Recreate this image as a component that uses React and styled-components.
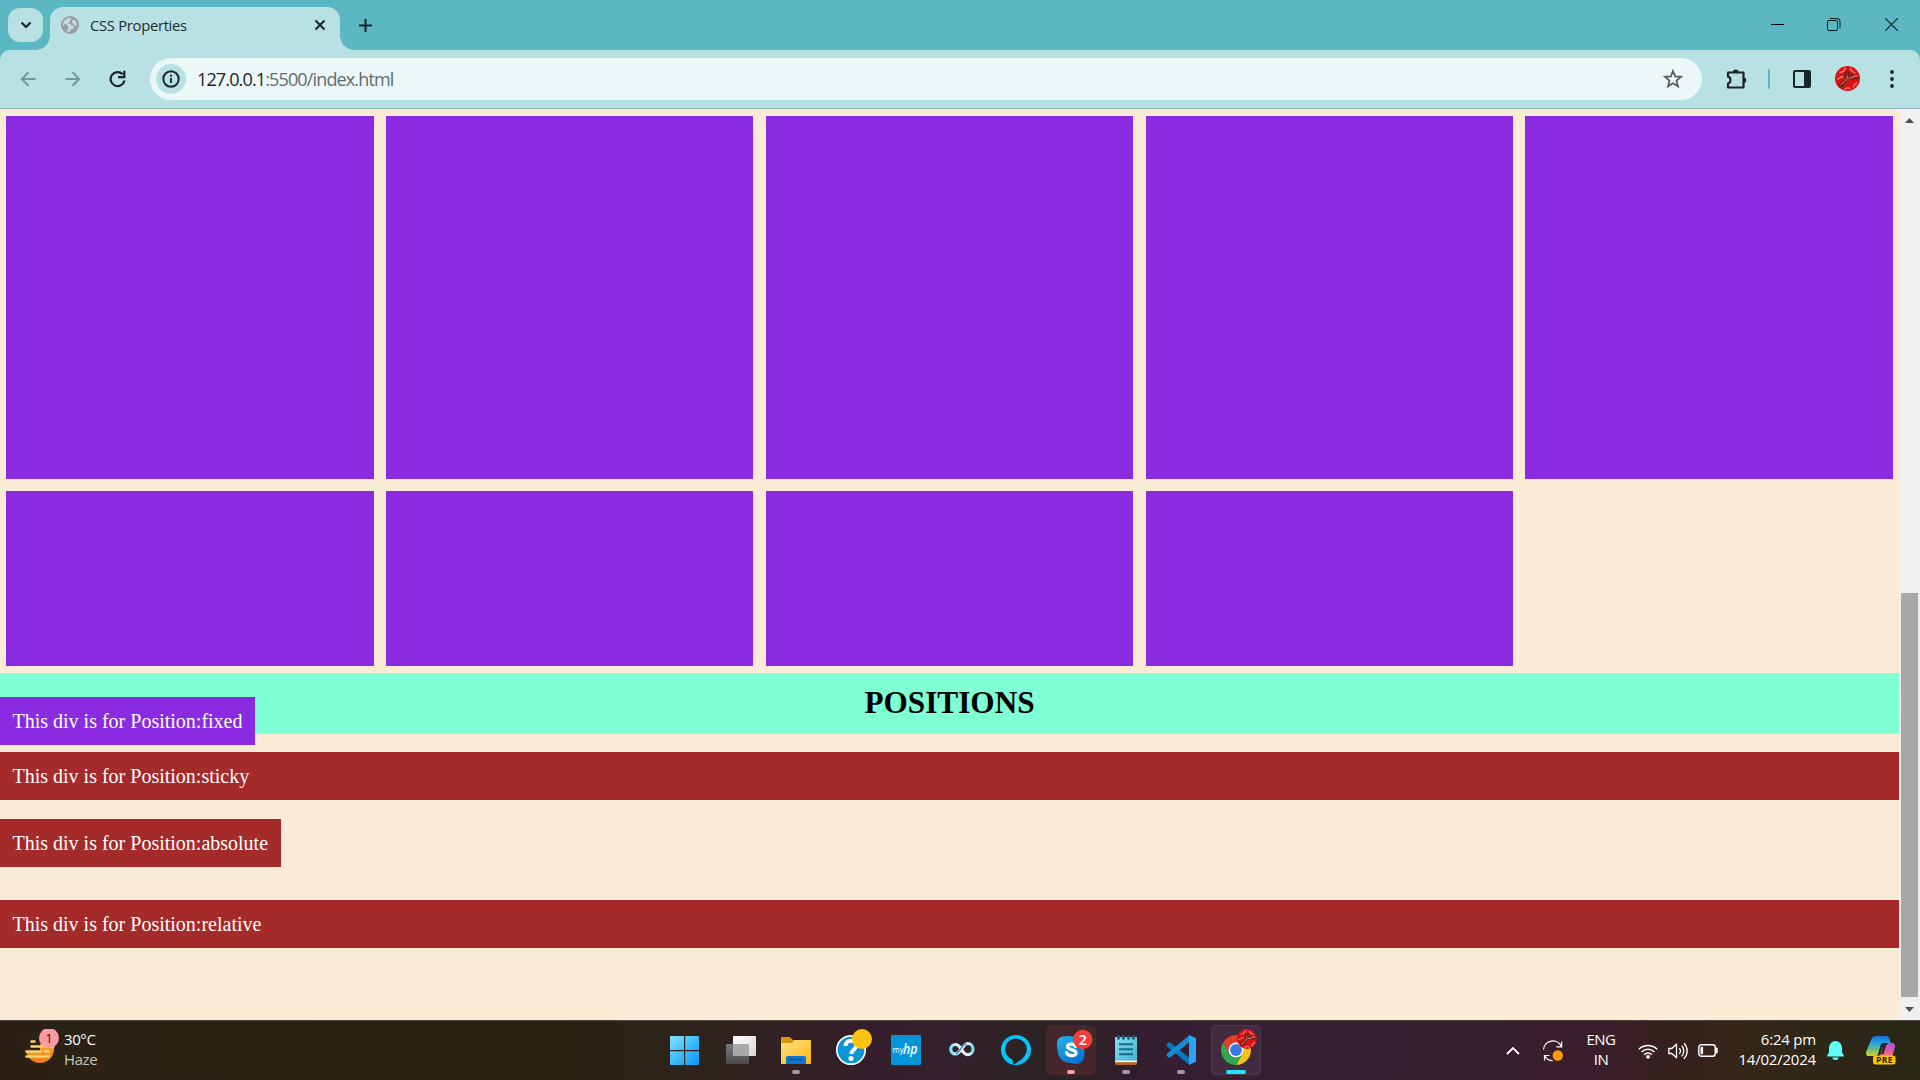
import React from "react";
import styled, { createGlobalStyle } from "styled-components";

const Global = createGlobalStyle`
  * { box-sizing: border-box; }
  html, body { margin: 0; padding: 0; }
  body { overflow: hidden; width: 1920px; height: 1080px; }
  svg { display: block; flex: none; }
`;

const ui = `"Open Sans", "Noto Sans", sans-serif`;

const Desktop = styled.div`
  width: 1920px;
  height: 1080px;
  display: flex;
  flex-direction: column;
  background: #5bb8c2;
  overflow: hidden;
`;

/* ---------- tab strip ---------- */
const TabStrip = styled.div`
  height: 50px;
  flex: none;
  display: flex;
  align-items: flex-start;
  padding-left: 8px;
`;
const TabSearch = styled.div`
  width: 35px;
  height: 34px;
  margin-top: 8px;
  border-radius: 12px;
  background: #b8e1e4;
  display: flex;
  align-items: center;
  justify-content: center;
`;
const Tab = styled.div`
  position: relative;
  width: 290px;
  height: 43px;
  margin: 7px 0 0 7px;
  padding: 0 13px 7px 11px;
  border-radius: 13px 13px 0 0;
  background: #b8e1e4;
  display: flex;
  align-items: center;
  &::before,
  &::after {
    content: "";
    position: absolute;
    bottom: 0;
    width: 14px;
    height: 14px;
  }
  &::before {
    left: -14px;
    background: radial-gradient(circle at 0 0, transparent 13.5px, #b8e1e4 14px);
  }
  &::after {
    right: -14px;
    background: radial-gradient(circle at 100% 0, transparent 13.5px, #b8e1e4 14px);
  }
`;
const TabTitle = styled.div`
  font: 400 14.8px/20px ${ui};
  letter-spacing: -0.3px;
  color: #1d2b2d;
  margin-left: 11px;
  flex: 1;
  white-space: nowrap;
`;
const NewTab = styled.div`
  width: 35px;
  height: 50px;
  margin-left: 8px;
  display: flex;
  align-items: center;
  justify-content: center;
`;
const WindowButtons = styled.div`
  display: flex;
  margin-left: auto;
  height: 49px;
`;
const WindowButton = styled.div`
  width: 57px;
  display: flex;
  align-items: center;
  justify-content: center;
`;

/* ---------- toolbar ---------- */
const Toolbar = styled.div`
  height: 59px;
  flex: none;
  display: flex;
  align-items: center;
  padding-left: 5px;
  border-radius: 10px 10px 0 0;
  border-bottom: 1px solid #93b5ba;
  background: #b8e1e4;
`;
const Slot = styled.div`
  width: 45px;
  height: 45px;
  display: flex;
  align-items: center;
  justify-content: center;
`;
const Omnibox = styled.div`
  width: 1552px;
  height: 42px;
  margin: 0 11.5px 0 10px;
  padding: 0 19.5px 0 6px;
  border-radius: 21px;
  background: #ecf8f8;
  display: flex;
  align-items: center;
`;
const SiteInfo = styled.div`
  width: 30px;
  height: 30px;
  border-radius: 50%;
  background: #b8e1e4;
  display: flex;
  align-items: center;
  justify-content: center;
`;
const Url = styled.div`
  font: 400 18px/24px ${ui};
  letter-spacing: -0.86px;
  margin-left: 11px;
  flex: 1;
  color: #5f6c6e;
  white-space: nowrap;
`;
const Host = styled.span`
  color: #1b2527;
`;
const Separator = styled.div`
  width: 2px;
  height: 20px;
  margin: 0 9.5px;
  border-radius: 1px;
  background: #5bb8c2;
`;

/* ---------- web page ---------- */
const Viewport = styled.div`
  height: 911px;
  flex: none;
  display: flex;
`;
const Page = styled.main`
  position: relative;
  width: 1899px;
  background: antiquewhite;
  font: 20px/23px "Liberation Serif", "Times New Roman", serif;
`;
const BoxGrid = styled.section`
  display: grid;
  grid-template-columns: repeat(5, 1fr);
  grid-template-rows: 363px 175px;
  gap: 12px 12.5px;
  padding: 7px 6.25px;
`;
const Box = styled.div`
  background: blueviolet;
`;
const Heading = styled.h2`
  margin: 0;
  height: 61px;
  font-size: 31.25px;
  line-height: 60px;
  text-align: center;
  color: #000;
  background: aquamarine;
`;
const Bar = styled.div`
  width: ${(p) => (p.$fit ? "fit-content" : "auto")};
  height: 48px;
  margin-top: ${(p) => p.$gap}px;
  padding: 12.5px;
  color: #fff;
  background: brown;
  white-space: nowrap;
`;
const FixedBar = styled(Bar)`
  position: absolute;
  left: 0;
  top: 588px;
  margin: 0;
  background: blueviolet;
`;
const Scrollbar = styled.div`
  width: 21px;
  background: #f0f0f0;
  display: flex;
  flex-direction: column;
  align-items: center;
  padding: 9px 0 8px;
`;
const Thumb = styled.div`
  width: 17px;
  height: 404px;
  margin: auto 0 10px;
  background: #a8a8a8;
`;

/* ---------- taskbar ---------- */
const Taskbar = styled.div`
  height: 60px;
  flex: none;
  display: flex;
  border-top: 1px solid #4a453a;
  background: linear-gradient(
    90deg,
    #2d1f15 0,
    #2b2315 110px,
    #292314 560px,
    #2d2419 680px,
    #351e2b 860px,
    #35202b 940px,
    #2b2325 1030px,
    #301e2b 1120px,
    #371e33 1200px,
    #371f2c 1480px,
    #3a1e2b 1600px,
    #35211a 1690px,
    #38241a 1720px,
    #2e2718 1800px,
    #292616 1920px
  );
  color: #fff;
  font: 400 15px/20px ${ui};
`;
const Weather = styled.div`
  width: 661px;
  flex: none;
  display: flex;
  padding: 8px 0 0 20px;
`;
const WeatherText = styled.div`
  margin-left: 4px;
  letter-spacing: -0.4px;
`;
const Muted = styled.div`
  color: #c9c5bf;
`;
const Apps = styled.div`
  flex: none;
  display: flex;
  gap: 5px;
  padding-top: 4px;
`;
const AppButton = styled.div`
  width: 50px;
  height: 50px;
  border-radius: 5px;
  background: ${(p) => p.$bg || "transparent"};
  box-shadow: ${(p) => (p.$edge ? "inset 0 0 0 1px " + p.$edge : "none")};
`;
const Tray = styled.div`
  flex: 1;
  display: flex;
  padding-left: 240px;
`;
const TrayIcon = styled.div`
  width: ${(p) => p.$w}px;
  height: 59px;
  display: flex;
  align-items: center;
  justify-content: center;
`;
const Language = styled.div`
  width: 40px;
  margin-right: 12px;
  padding-top: 8px;
  text-align: center;
  letter-spacing: -0.5px;
`;
const Clock = styled.div`
  width: 93px;
  padding-top: 8px;
  text-align: right;
  letter-spacing: -0.2px;
  white-space: nowrap;
`;

/* ---------- icons ---------- */
const Icon = ({ w, h, children, ...rest }) => (
  <svg width={w} height={h} viewBox={`0 0 ${w} ${h}`} fill="none" {...rest}>
    {children}
  </svg>
);
const AppIcon = ({ bg, edge, children }) => (
  <AppButton $bg={bg} $edge={edge}>
    <Icon w={50} h={50}>{children}</Icon>
  </AppButton>
);
const Indicator = ({ x = 21, w = 8, color = "#a09aa0" }) => (
  <rect x={x} y="45" width={w} height="4" rx="2" fill={color} />
);
const RedBadge = ({ cx, cy, r }) => (
  <g transform={`translate(${cx} ${cy}) scale(${r / 12.5})`}>
    <circle r="12.5" fill="#d81416" />
    <path d="M-8-6c3 0 5-1 6-5M3-10.500c0 2 2 4 5 5M-10 1c2-2 4-3 6-3M6 9c0-3 2-4 4-5M-3 11c2-2 4-2 6-1" stroke="#f0806e" strokeWidth="1.300" />
    <path d="M-8 8c0-4 4-4 6-6C1-1 2.500-5 1-6.500-1-7-4-3-2-.5 0 0 1-1 2-2c0 2 1 3 2 1l1.500-4M5 1c1 0 1.500-2 2.500-2s0 3 3 0M-8 8c3 1 6-3 7-7" stroke="#5f2a22" strokeWidth="1.700" />
    <path d="M-7 6.500c3-3 6-3 7-9M1-.5c3 0 5-1.500 9-2.500" stroke="#dcb5a6" strokeWidth="0.800" />
  </g>
);

const ChromeIcon = () => (
  <g transform="translate(25 25)">
    <path d="M0-7.500H12.990A15 15 0 0 1 0 15L6.500 3.750Z" fill="#fcc31e" />
    <path d="M-12.990-7.500L-6.500 3.750A7.500 7.500 0 0 0 6.500 3.750L0 15A15 15 0 0 1-12.990-7.500Z" fill="#2da94f" />
    <path d="M-12.990-7.500A15 15 0 0 1 12.990-7.500H0L-6.500 3.750Z" fill="#e33b2e" />
    <circle r="7.500" fill="#fff" />
    <circle r="5.900" fill="#3b78e8" />
  </g>
);

const Gradients = () => (
  <svg width="0" height="0" style={{ position: "absolute" }}>
    <defs>
      <linearGradient id="win" x1="9" y1="11" x2="38" y2="40" gradientUnits="userSpaceOnUse">
        <stop stopColor="#86e1fb" /><stop offset=".5" stopColor="#3fbdf8" /><stop offset="1" stopColor="#0d92f5" />
      </linearGradient>
      <linearGradient id="pane" x1="0" y1="0" x2="1" y2="1">
        <stop stopColor="#fff" /><stop offset="1" stopColor="#d8d8d8" />
      </linearGradient>
      <linearGradient id="paneBack" x1="0" y1="0" x2="0" y2="1">
        <stop stopColor="#777" /><stop offset="1" stopColor="#4c4c4c" />
      </linearGradient>
      <linearGradient id="folder" x1="0" y1="0" x2="1" y2="1">
        <stop stopColor="#ffe083" /><stop offset="1" stopColor="#fcb912" />
      </linearGradient>
      <linearGradient id="skype" x1="0" y1="0" x2="0.6" y2="1">
        <stop stopColor="#22b7f0" /><stop offset="1" stopColor="#0474d0" />
      </linearGradient>
      <linearGradient id="loop" x1="0" y1="0" x2="1" y2="0">
        <stop stopColor="#6fe8f0" /><stop offset=".4" stopColor="#fff" /><stop offset=".8" stopColor="#d8f3ff" /><stop offset="1" stopColor="#72dce8" />
      </linearGradient>
      <linearGradient id="note" x1="0" y1="0" x2="1" y2="1">
        <stop stopColor="#86dcee" /><stop offset="1" stopColor="#43b4d4" />
      </linearGradient>
      <linearGradient id="sun" x1="0" y1="0" x2="0" y2="1">
        <stop stopColor="#fcc430" /><stop offset="1" stopColor="#f0781c" />
      </linearGradient>
      <linearGradient id="copA" x1="0" y1="0" x2="0" y2="1">
        <stop stopColor="#1670d8" /><stop offset=".35" stopColor="#1fa3e8" /><stop offset=".65" stopColor="#5cc07c" /><stop offset="1" stopColor="#e5cf2c" />
      </linearGradient>
      <linearGradient id="copB" x1="0" y1="0" x2="0" y2="1">
        <stop stopColor="#a855e0" /><stop offset=".6" stopColor="#e85aa8" /><stop offset="1" stopColor="#f88060" />
      </linearGradient>
    </defs>
  </svg>
);

const bars = [
  { label: "This div is for Position:sticky", gap: 18 },
  { label: "This div is for Position:absolute", gap: 19, fit: true },
  { label: "This div is for Position:relative", gap: 33 },
];

const Browser = () => (
  <>
    <TabStrip>
      <TabSearch>
        <Icon w={12} h={8}><path d="M1.500 1.500L6 6l4.500-4.500" stroke="#1b2527" strokeWidth="2.200" /></Icon>
      </TabSearch>
      <Tab>
        <Icon w={18} h={18}>
          <circle cx="9" cy="9" r="9" fill="#9b9ba3" />
          <path d="M2 8C2.500 4.500 5.500 2 9 2l1.500 1-2 1.700.3 1.600L6.500 8H9l1.500 1.500 2.500.5-.5 2.500-3 1.200L9 16C5 16 4.500 13 4.800 11.500L2 9.500Z" fill="#c3dcdf" />
          <path d="M3.500 7.500l2.700 1.300 1.300 2L7 14.500 4.500 13 3 10Z" fill="#9b9ba3" />
          <path d="M12.500 3.200l2.700 2.800.8 3-1.500 1-2-1.500-1.500-2 .3-2Z" fill="#c3dcdf" />
        </Icon>
        <TabTitle>CSS Properties</TabTitle>
        <Icon w={14} h={14}><path d="M2.500 2.500l9 9M11.500 2.500l-9 9" stroke="#1b2527" strokeWidth="2" /></Icon>
      </Tab>
      <NewTab>
        <Icon w={13} h={13}><path d="M6.500 0v13M0 6.500h13" stroke="#1b2527" strokeWidth="2" /></Icon>
      </NewTab>
      <WindowButtons>
        <WindowButton><Icon w={13} h={13}><path d="M0 6.500h13" stroke="#000" /></Icon></WindowButton>
        <WindowButton>
          <Icon w={15} h={13}>
            <rect x=".5" y="2.500" width="10" height="10" rx="1.500" stroke="#0c1a1c" />
            <path d="M3 .5h7a3 3 0 0 1 3 3V10.500" stroke="#0c1a1c" />
          </Icon>
        </WindowButton>
        <WindowButton><Icon w={13} h={13}><path d="M.3.300l12.400 12.400M12.700.3L.3 12.700" stroke="#0c1a1c" strokeWidth="1.200" /></Icon></WindowButton>
      </WindowButtons>
    </TabStrip>

    <Toolbar>
      <Slot><Icon w={16} h={16}><path d="M15.500 8H2M8.500 1.300L1.800 8l6.700 6.700" stroke="#74989c" strokeWidth="2" /></Icon></Slot>
      <Slot><Icon w={16} h={16}><path d="M.5 8H14M7.500 1.300L14.200 8l-6.700 6.700" stroke="#74989c" strokeWidth="2" /></Icon></Slot>
      <Slot>
        <Icon w={18} h={18}>
          <path d="M13.700 4.200A7 7 0 1 0 15.500 10.500" stroke="#1b2527" strokeWidth="2.200" />
          <path d="M15.300 .8V7.200H9" stroke="#1b2527" strokeWidth="2.200" />
        </Icon>
      </Slot>
      <Omnibox>
        <SiteInfo>
          <Icon w={18} h={18}>
            <circle cx="9" cy="9" r="7.700" stroke="#1b2527" strokeWidth="2" />
            <path d="M9 8v5M9 4.800v2" stroke="#1b2527" strokeWidth="1.900" />
          </Icon>
        </SiteInfo>
        <Url><Host>127.0.0.1</Host>:5500/index.html</Url>
        <Icon w={20} h={20}>
          <path d="M10 2l2.150 5.400 5.850.45-4.500 3.750 1.450 5.700L10 14.200l-4.950 3.100 1.450-5.700L2 7.850l5.850-.45z" stroke="#555f61" strokeWidth="1.800" />
        </Icon>
      </Omnibox>
      <Slot>
        <Icon w={22} h={22}>
          <path d="M3 4.500H18.500V19.500H3V15.500c3.200-.3 3.200-6.500 0-6.800Z" stroke="#1b2527" strokeWidth="2.200" strokeLinejoin="round" />
          <path d="M7.800 4.500a3 3 0 0 1 6 0ZM18.500 9.500a2.800 2.800 0 0 1 0 5.600Z" fill="#1b2527" />
        </Icon>
      </Slot>
      <Separator />
      <Slot>
        <Icon w={18} h={18}>
          <rect x="1" y="1" width="16" height="16" rx="1" stroke="#1b2527" strokeWidth="2" />
          <path d="M11 1h6v16h-6z" fill="#1b2527" />
        </Icon>
      </Slot>
      <Slot><Icon w={25} h={26}><RedBadge cx={12.5} cy={12.5} r={12.5} /></Icon></Slot>
      <Slot>
        <Icon w={4} h={18}>
          <circle cx="2" cy="2" r="1.900" fill="#1b2527" /><circle cx="2" cy="9" r="1.900" fill="#1b2527" /><circle cx="2" cy="16" r="1.900" fill="#1b2527" />
        </Icon>
      </Slot>
    </Toolbar>
  </>
);

export default function App() {
  return (
    <Desktop>
      <Global />
      <Gradients />
      <Browser />
      <Viewport>
        <Page>
          <BoxGrid>
            {Array.from({ length: 9 }, (_, i) => <Box key={i} />)}
          </BoxGrid>
          <Heading>POSITIONS</Heading>
          {bars.map((b) => (
            <Bar key={b.label} $gap={b.gap} $fit={b.fit}>{b.label}</Bar>
          ))}
          <FixedBar $fit>This div is for Position:fixed</FixedBar>
        </Page>
        <Scrollbar>
          <Icon w={9} h={5}><path d="M4.500 0L9 5H0z" fill="#505050" /></Icon>
          <Thumb />
          <Icon w={9} h={5}><path d="M4.500 5L9 0H0z" fill="#505050" /></Icon>
        </Scrollbar>
      </Viewport>

      <Taskbar>
        <Weather>
          <Icon w={40} h={40}>
            <circle cx="20" cy="20" r="14" fill="url(#sun)" />
            <path d="M0 0h40v15H0zM0 15h20v8H0z" fill="#2b2115" />
            <path d="M11.500 12.500h3M11.500 17.500h22M6.500 22.500h14M25 22.500h4M6.500 27.500h22" stroke="#f4d273" strokeWidth="2.600" strokeLinecap="round" />
            <circle cx="29" cy="9" r="10" fill="#ff99a4" />
            <text x="29" y="13.500" textAnchor="middle" fontSize="13" fontFamily="Open Sans" fill="#2a1518">1</text>
          </Icon>
          <WeatherText>
            <div>30°C</div>
            <Muted>Haze</Muted>
          </WeatherText>
        </Weather>

        <Apps>
          <AppIcon>
            <path d="M10 11h13v14H9V12a1 1 0 0 1 1-1ZM24.200 11H37a1 1 0 0 1 1 1v13H24.200ZM9 26.200h14V40H10a1 1 0 0 1-1-1ZM24.200 26.200H38V39a1 1 0 0 1-1 1H24.200Z" fill="url(#win)" />
          </AppIcon>
          <AppIcon>
            <rect x="17" y="11" width="23" height="20" rx="1" fill="url(#pane)" />
            <rect x="10" y="19" width="23" height="20" rx="1" fill="url(#paneBack)" />
            <path d="M17 19h16v12H17z" fill="#a9a9a9" />
          </AppIcon>
          <AppIcon>
            <path d="M10 13a1 1 0 0 1 1-1h8l3 3h16v8H10z" fill="#d9960c" />
            <path d="M10 18h11l2.500-3H39a1 1 0 0 1 1 1v22a1 1 0 0 1-1 1H11a1 1 0 0 1-1-1z" fill="url(#folder)" />
            <path d="M15 39v-6a2 2 0 0 1 2-2h16a2 2 0 0 1 2 2v6z" fill="#1177cc" />
            <path d="M19 34.500h12" stroke="#0b3f87" strokeWidth="1.200" />
            <Indicator />
          </AppIcon>
          <AppIcon>
            <circle cx="25" cy="25" r="14.200" fill="#0b94d6" stroke="#f2fafd" strokeWidth="1.700" />
            <path d="M19.500 21c0-7 11-7 11-.5 0 4-5.200 4-5.200 8.500" stroke="#fff" strokeWidth="4" />
            <circle cx="25" cy="33.500" r="2.500" fill="#fff" />
            <circle cx="36" cy="14" r="10" fill="#ffc20e" />
          </AppIcon>
          <AppIcon>
            <rect x="10" y="10" width="30" height="30" rx="1.500" fill="#0596d7" />
            <text x="11.500" y="28" fontSize="9" fontFamily="Open Sans" fill="#fff" textLength="11" lengthAdjust="spacingAndGlyphs">my</text>
            <text x="22" y="29" fontSize="15" fontStyle="italic" fontWeight="600" fontFamily="Open Sans" fill="#fff" textLength="14.500" lengthAdjust="spacingAndGlyphs">hp</text>
          </AppIcon>
          <AppIcon>
            <path d="M25.500 24.500C23 20.500 21 19.500 19.500 19.500a4.500 4.500 0 0 0 0 9.500c3 0 5-4 7-6.500s3.300-4 5-4a5.200 5.200 0 0 1 0 11.200c-2.500 0-4.300-2.500-6-5.200Z" stroke="url(#loop)" strokeWidth="3.200" />
            <path d="M20 28.800c4-1 5-9 10.500-10.200" stroke="#2478cc" strokeWidth="1.400" />
          </AppIcon>
          <AppIcon>
            <path fillRule="evenodd" d="M25 10a15 15 0 0 0-3 29.700v-3.100a9 9 0 0 0-.9-2.200A10.800 10.800 0 1 1 35.800 24.500C35.500 32 28.500 36.500 22 39.700A15 15 0 1 0 25 10Z" fill="#05c3f9" />
          </AppIcon>
          <AppIcon bg="#45272b">
            <path d="M11 19c0-6 4-8 8-7.500C23 10 36 12 37.500 23c2.500 6 1 16-7.500 16-3 0-5-1-5-1C17 38 12 33 12 26c-1-3-1-5-1-7Z" fill="url(#skype)" />
            <path d="M29.500 21.500c-1-3-8-3.500-8 0 0 4 8.500 2.300 8.500 6.500 0 3.800-8 3.500-9.500-.3" stroke="#fff" strokeWidth="3.200" strokeLinecap="round" />
            <circle cx="36.700" cy="14.500" r="9.700" fill="#ee4037" />
            <text x="36.700" y="19.500" textAnchor="middle" fontSize="14" fontWeight="600" fontFamily="Open Sans" fill="#fff">2</text>
            <Indicator color="#ff9aa6" />
          </AppIcon>
          <AppIcon>
            <path d="M14 36h22v2.500a1.500 1.500 0 0 1-1.500 1.500h-19a1.500 1.500 0 0 1-1.500-1.500z" fill="#b5651d" />
            <path d="M14 34h22v3.200H14z" fill="#f4f0e8" />
            <path d="M14 12h22v23.500H14z" fill="url(#note)" />
            <path d="M18 19.300h14M18 24.300h14M18 29.300h14" stroke="#176b89" strokeWidth="2" />
            <path d="M17.500 11v2.500M22.500 11v2.500M27.500 11v2.500M32.500 11v2.500" stroke="#125a77" strokeWidth="2.600" strokeLinecap="round" />
            <Indicator />
          </AppIcon>
          <AppIcon>
            <path d="M33 39.500L11 21.500l-.5-2 2-2 2 .2L33 32.500z" fill="#0879c4" />
            <path d="M33 10.500L33 17.500 14.500 32.300l-2 .2-2-2 .5-2z" fill="#1a8ad4" />
            <path d="M33 10l7 3.200v23.600L33 40z" fill="#2ba5f2" />
            <Indicator />
          </AppIcon>
          <AppIcon bg="#412b3e" edge="#4f3a4c">
            <ChromeIcon />
            <RedBadge cx={36} cy={14} r={10} />
            <Indicator x={15} w={20} color="#1ee8ff" />
          </AppIcon>
        </Apps>

        <Tray>
          <TrayIcon $w={24}>
            <Icon w={14} h={8}><path d="M1 7l6-6 6 6" stroke="#fff" strokeWidth="1.800" /></Icon>
          </TrayIcon>
          <TrayIcon $w={56}>
            <Icon w={22} h={22}>
              <path d="M1.500 9.500A9.300 9.300 0 0 1 19.300 6.500M19.700 1.500v5.300h-5.300M2.500 20.500v-5h5M2.700 15.700a9.300 9.300 0 0 0 8 5" stroke="#fff" strokeWidth="1.200" />
              <circle cx="15.800" cy="15.500" r="5.200" fill="#ff9a0a" />
            </Icon>
          </TrayIcon>
          <Language>
            <div>ENG</div>
            <div>IN</div>
          </Language>
          <TrayIcon $w={30}>
            <Icon w={20} h={16}>
              <path d="M.8 6.200a13 13 0 0 1 18.400 0M3.600 9a9 9 0 0 1 12.800 0M6.200 11.700a5.300 5.300 0 0 1 7.600 0" stroke="#fff" strokeWidth="1.500" />
              <circle cx="10" cy="13.800" r="1.900" fill="#fff" />
            </Icon>
          </TrayIcon>
          <TrayIcon $w={30}>
            <Icon w={20} h={18}>
              <path d="M.8 6.500v5h3l4.700 4.300V2.200L3.800 6.500z" stroke="#fff" strokeWidth="1.300" strokeLinejoin="round" />
              <path d="M11.300 6.300a4 4 0 0 1 0 5.400M13.700 3.800a7.500 7.500 0 0 1 0 10.400M16 1.300a11 11 0 0 1 0 15.400" stroke="#fff" strokeWidth="1.300" />
            </Icon>
          </TrayIcon>
          <TrayIcon $w={30}>
            <Icon w={20} h={13}>
              <rect x=".8" y=".8" width="16.400" height="11.400" rx="2.500" stroke="#fff" strokeWidth="1.400" />
              <path d="M18.700 4.500v4" stroke="#fff" strokeWidth="2" strokeLinecap="round" />
              <rect x="2.500" y="2.800" width="2.600" height="7.400" rx="1" fill="#fff" />
            </Icon>
          </TrayIcon>
          <Clock>
            <div>6:24 pm</div>
            <div>14/02/2024</div>
          </Clock>
          <TrayIcon $w={38}>
            <Icon w={17} h={19}>
              <path d="M8.500 0a6.500 6.500 0 0 1 6.500 6.500v4.700l1.800 3.300c.2.700-.1 1-.8 1H1c-.7 0-1-.3-.8-1L2 11.200V6.500A6.500 6.500 0 0 1 8.500 0ZM5.500 16.500h6a3 2.500 0 0 1-6 0Z" fill="#5ffbff" />
            </Icon>
          </TrayIcon>
          <TrayIcon $w={53}>
            <Icon w={30} h={30}>
              <path d="M5.500 3C6.500 1 7.700 0 9.700 0H20c2 0 3 1.200 3.600 3l1.200 4H18c-2 0-3 1-3.600 3l-2 7c-.6 2-1.600 3-3.600 3H3c-2.500 0-3.500-2-2.800-4.500z" fill="url(#copA)" />
              <path d="M22 7h4c2.500 0 3.600 2 2.900 4.500L26 21H9c2.500 0 3.500-1 4.200-3l2-6c.4-1 1-1.700 2-1.700l-2 8h2.300L20 10z" fill="url(#copB)" />
              <path d="M14.500 10c.6-2 1.600-3 3.500-3l-4 13h-2z" fill="#2a2433" />
              <rect x="7" y="19.500" width="22.500" height="9" rx="2.500" fill="#ffc400" />
              <text x="10" y="27" fontSize="8.500" fontWeight="700" fontFamily="Open Sans" fill="#241c00" textLength="16.500">PRE</text>
            </Icon>
          </TrayIcon>
        </Tray>
      </Taskbar>
    </Desktop>
  );
}
